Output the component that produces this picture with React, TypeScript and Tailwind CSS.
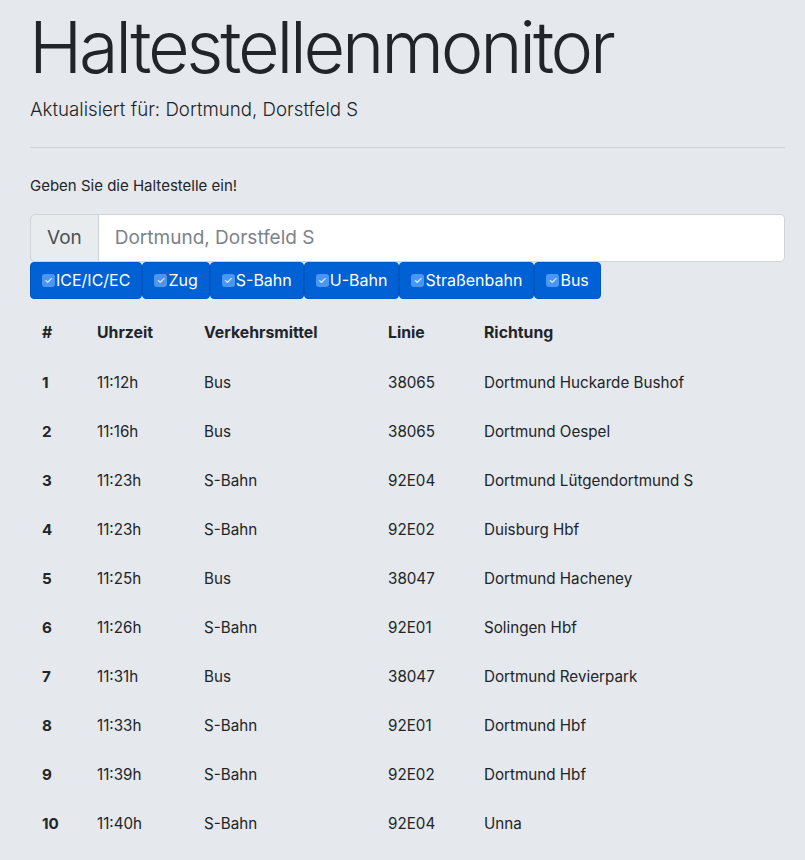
const departures = [
  { n: 1, time: '11:12h', mode: 'Bus', line: '38065', dir: 'Dortmund Huckarde Bushof' },
  { n: 2, time: '11:16h', mode: 'Bus', line: '38065', dir: 'Dortmund Oespel' },
  { n: 3, time: '11:23h', mode: 'S-Bahn', line: '92E04', dir: 'Dortmund Lütgendortmund S' },
  { n: 4, time: '11:23h', mode: 'S-Bahn', line: '92E02', dir: 'Duisburg Hbf' },
  { n: 5, time: '11:25h', mode: 'Bus', line: '38047', dir: 'Dortmund Hacheney' },
  { n: 6, time: '11:26h', mode: 'S-Bahn', line: '92E01', dir: 'Solingen Hbf' },
  { n: 7, time: '11:31h', mode: 'Bus', line: '38047', dir: 'Dortmund Revierpark' },
  { n: 8, time: '11:33h', mode: 'S-Bahn', line: '92E01', dir: 'Dortmund Hbf' },
  { n: 9, time: '11:39h', mode: 'S-Bahn', line: '92E02', dir: 'Dortmund Hbf' },
  { n: 10, time: '11:40h', mode: 'S-Bahn', line: '92E04', dir: 'Unna' },
];

const filters = ['ICE/IC/EC', 'Zug', 'S-Bahn', 'U-Bahn', 'Straßenbahn', 'Bus'];

function FilterButton({ label }: { label: string }) {
  return (
    <label className="flex items-center h-[37px] px-[11px] bg-[#0061d5] text-white text-[16px] rounded-[4px] border border-[#0056c0] cursor-pointer">
      <span className="w-[13px] h-[13px] rounded-[3px] bg-[#4a97f3] flex items-center justify-center text-[10px] leading-none mr-[1px]">
        ✓
      </span>
      {label}
    </label>
  );
}

export default function App() {
  return (
    <div className="min-h-[860px] bg-[#e5e8ed] text-[#212529] font-['Inter','Liberation_Sans',sans-serif]">
      <div className="pl-[30px] pr-[20px]">
        <h1 className="text-[72px] font-light leading-[1.2] tracking-[-0.045em] pt-[4px] -ml-[1px]">Haltestellenmonitor</h1>
        <p className="text-[18.7px] font-light leading-[1.5] mt-[6px]">Aktualisiert für: Dortmund, Dorstfeld S</p>
        <hr className="border-t border-[#ced1d6] mt-[23px] mb-[27px]" />
        <p className="text-[15px] leading-[1.5]">Geben Sie die Haltestelle ein!</p>

        <div className="flex mt-[16px] h-[48px]">
          <span className="flex items-center px-4 bg-[#e9ecef] border border-[#ced4da] rounded-l-[5px] text-[19px] text-[#495057]">Von</span>
          <input
            className="flex-1 bg-white border border-l-0 border-[#ced4da] rounded-r-[5px] px-4 text-[19px] placeholder:text-[#7b838a] outline-none"
            placeholder="Dortmund, Dorstfeld S"
          />
        </div>

        <div className="flex">
          {filters.map((f) => (
            <FilterButton key={f} label={f} />
          ))}
        </div>

        <table className="w-full mt-[10px] text-[15.2px] border-collapse">
          <thead>
            <tr className="text-left font-bold text-[15.8px]">
              <th className="w-[55px] px-3 pt-3 pb-[14px]">#</th>
              <th className="w-[107px] px-3 pt-3 pb-[14px]">Uhrzeit</th>
              <th className="w-[184px] px-3 pt-3 pb-[14px]">Verkehrsmittel</th>
              <th className="w-[96px] px-3 pt-3 pb-[14px]">Linie</th>
              <th className="px-3 pt-3 pb-[14px]">Richtung</th>
            </tr>
          </thead>
          <tbody>
            {departures.map((d) => (
              <tr key={d.n} className="h-[49px]">
                <td className="px-3 font-bold">{d.n}</td>
                <td className="px-3">{d.time}</td>
                <td className="px-3">{d.mode}</td>
                <td className="px-3">{d.line}</td>
                <td className="px-3">{d.dir}</td>
              </tr>
            ))}
          </tbody>
        </table>
      </div>
    </div>
  );
}
